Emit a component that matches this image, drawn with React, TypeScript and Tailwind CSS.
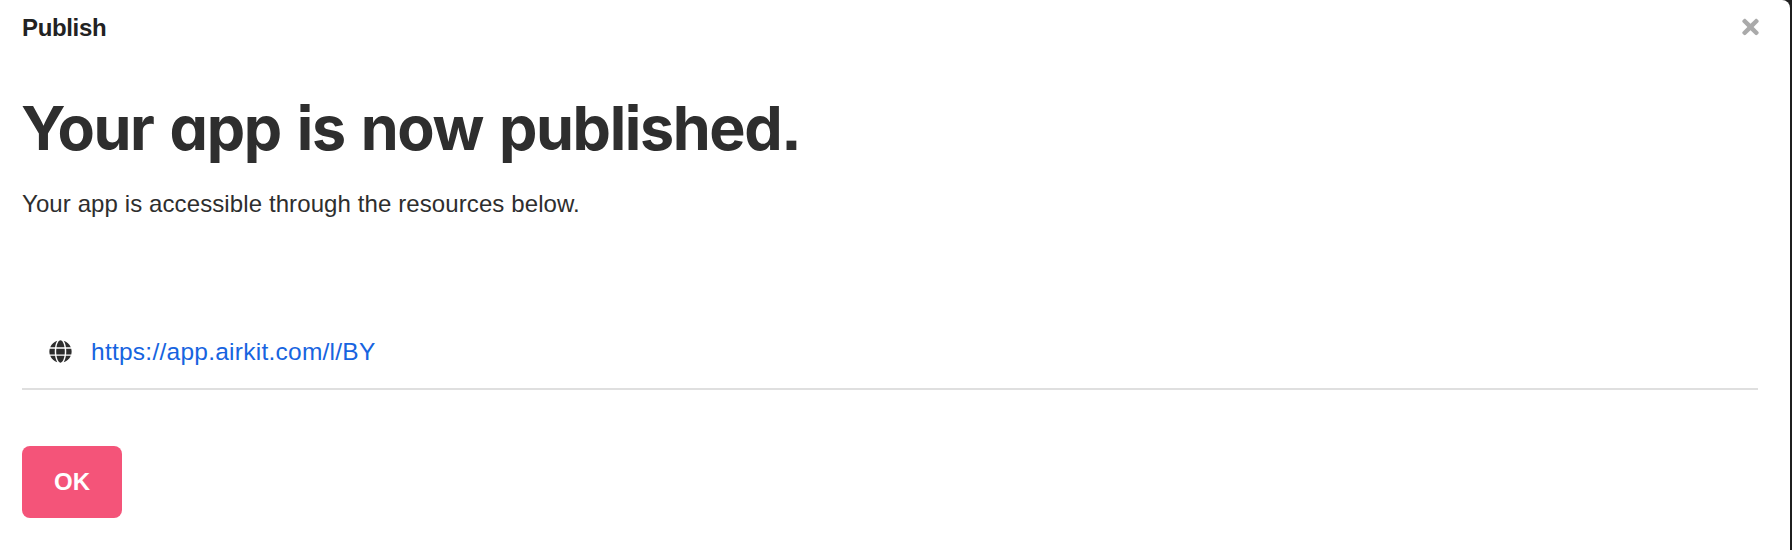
import { FaGlobe, FaTimes } from "react-icons/fa";

export default function App() {
  return (
    <div className="h-[550px] w-full overflow-hidden bg-[#1f1f1f] pr-[2px] font-['Liberation_Sans',Arial,sans-serif] text-2xl text-[#2e2e2e]">
      <div className="flex h-full flex-col rounded-tr-lg bg-white pr-8 pl-[22px]">
        <header className="flex h-[54px] items-center justify-between text-[#222]">
          <h2 className="pt-0.5 font-bold tracking-[-0.35px]">Publish</h2>
          <button aria-label="Close" className="-mr-px text-[#aaa]">
            <FaTimes className="h-6 w-[17px]" />
          </button>
        </header>
        <h1 className="mt-9 -ml-px h-[76px] whitespace-nowrap font-['Inter',sans-serif] text-[61px] leading-[76px] font-bold [word-spacing:3px] tracking-[-1.4px] [font-feature-settings:'cv11','ss07']">
          Your app is now published.
        </h1>
        <p className="mt-[22px] leading-8 tracking-[0.1px]">
          Your app is accessible through the resources below.
        </p>
        <div className="mt-[94px] flex h-[76px] items-center border-b-2 border-[#dfdfdf] pl-[27px]">
          <FaGlobe className="size-[23px]" />
          <a href="#" className="ml-[19px] pt-0.5 text-[24.5px] tracking-[0.25px] text-[#1764e0]">
            https://app.airkit.com/l/BY
          </a>
        </div>
        <button className="mt-14 h-[72px] w-[100px] rounded-lg bg-[#f45479] font-bold text-white">
          OK
        </button>
      </div>
    </div>
  );
}
